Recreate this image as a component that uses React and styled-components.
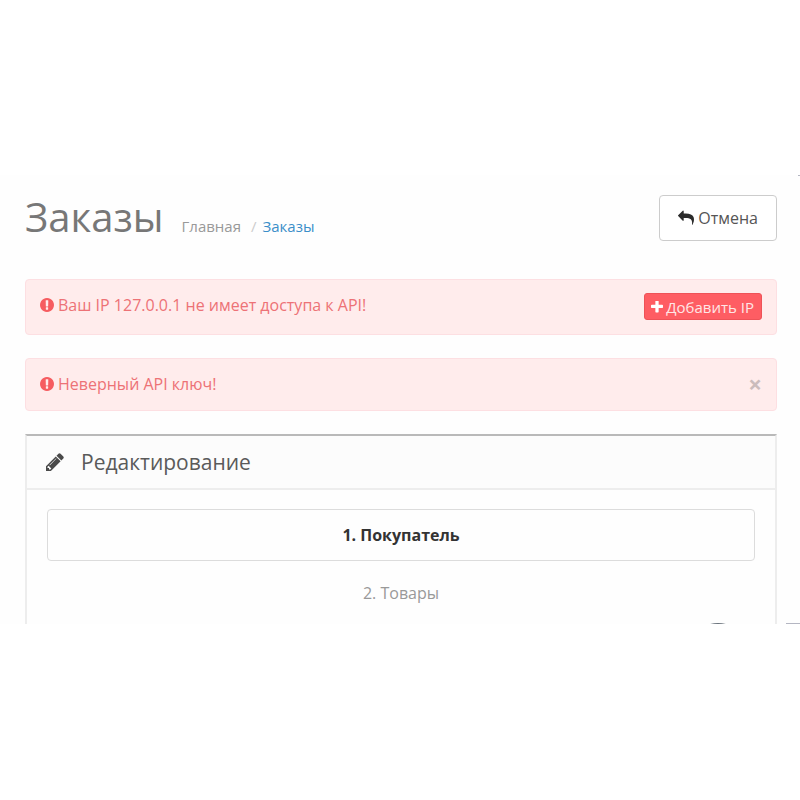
import React from 'react'
import styled, { createGlobalStyle } from 'styled-components'

const GlobalStyle = createGlobalStyle`
    * {
        box-sizing: border-box;
    }
    body {
        margin: 0;
        background: #fff;
        color: #444;
        font-family: "Open Sans", "Noto Sans", sans-serif;
        font-size: 16px;
        line-height: 24px;
    }
`;

const Screen = styled.div`
    position: relative;
    margin-top: 175px;
    padding: 20px 23px 0 25px;
    background: #fefefe;
    overflow: hidden;
`;

const PageHeader = styled.header`
    display: flex;
    justify-content: space-between;
    align-items: flex-start;
    margin-bottom: 38px;
`;

const Heading = styled.div`
    display: flex;
    align-items: baseline;
    gap: 18px;
    h1 {
        margin: 0;
        color: #777;
        font-size: 40px;
        font-weight: 400;
        line-height: 44px;
    }
`;

const Breadcrumb = styled.nav`
    display: flex;
    gap: 6px;
    font-size: 15px;
    color: #ccc;
    span {
        margin-left: 4px;
    }
`;

const Crumb = styled.a`
    color: ${({ $active }) => ($active ? '#3b8fc9' : '#999')};
    text-decoration: none;
`;

const Button = styled.button`
    display: flex;
    justify-content: center;
    align-items: center;
    gap: 4px;
    height: 46px;
    padding: 0 18px;
    border: 1px solid #ccc;
    border-radius: 4px;
    background: #fff;
    color: #555;
    font: inherit;
    svg {
        color: #2b2b2b;
    }
`;

const DangerButton = styled(Button)`
    height: 27px;
    padding: 0 7px 0 6px;
    border-color: #ee5257;
    border-radius: 3px;
    background: #fe5d63;
    color: #ffe6e6;
    font-size: 15px;
    gap: 3px;
    svg {
        color: #fff;
    }
`;

const Alert = styled.div`
    display: flex;
    justify-content: space-between;
    align-items: flex-start;
    margin-bottom: 23px;
    padding: 13px 14px 14px;
    border: 1px solid #fddfe2;
    border-radius: 4px;
    background: #ffecec;
    color: #ed7276;
`;

const Message = styled.div`
    display: flex;
    align-items: center;
    gap: 4px;
    svg {
        color: #f65c60;
    }
`;

const CloseButton = styled.button`
    padding: 0;
    border: none;
    background: transparent;
    color: #cbbcbc;
    font: inherit;
    font-size: 24px;
    font-weight: 700;
    line-height: 24px;
`;

const Panel = styled.section`
    border: 2px solid #ededed;
    border-top-color: #b9b9b9;
    border-bottom: none;
`;

const PanelHeading = styled.div`
    display: flex;
    align-items: center;
    gap: 17px;
    padding: 11px 19px;
    border-bottom: 2px solid #ededed;
    background: #fcfcfc;
    h2 {
        margin: 0;
        color: #5a5a5a;
        font-size: 21px;
        font-weight: 400;
        line-height: 30px;
    }
    svg {
        color: #4a4a4a;
    }
`;

const Steps = styled.div`
    display: flex;
    flex-direction: column;
    gap: 6px;
    padding: 19px 20px 5px;
`;

const Step = styled.button`
    height: 52px;
    border: 1px solid ${({ $active }) => ($active ? '#dcdcdc' : 'transparent')};
    border-radius: 4px;
    background: transparent;
    color: ${({ $active }) => ($active ? '#333' : '#999')};
    font: inherit;
    font-weight: ${({ $active }) => ($active ? 700 : 400)};
`;

const ChatBubble = styled.div`
    position: absolute;
    right: 51px;
    bottom: -61px;
    width: 62px;
    height: 62px;
    border-radius: 50%;
    background: #68717a;
`;

const Edge = styled.div`
    position: absolute;
    right: 0;
    width: ${({ $width }) => $width}px;
    height: 1px;
    background: #b4b6c2;
    ${({ $side }) => $side}: 0;
`;

const paths = {
    reply: 'M1792 1120q0 166-127 451-3 7-10.5 24t-13.5 30-13 22q-12 17-28 17-15 0-23.5-10t-8.5-25q0-9 2.5-26.5t2.5-23.5q5-68 5-123 0-101-17.5-181t-48.5-138.5-80-101-105.5-69.5-133-42.5-154-21.5-175.5-6h-224v256q0 26-19 45t-45 19-45-19l-512-512q-19-19-19-45t19-45l512-512q19-19 45-19t45 19 19 45v256h224q713 0 875 403 53 134 53 333z',
    alert: 'M896 128q209 0 385.5 103t279.5 279.5 103 385.5-103 385.5-279.5 279.5-385.5 103-385.5-103-279.5-279.5-103-385.5 103-385.5 279.5-279.5 385.5-103zm128 1247v-190q0-14-9-23.5t-22-9.5h-192q-13 0-23 10t-10 23v190q0 13 10 23t23 10h192q13 0 22-9.5t9-23.5zm-2-344l18-621q0-12-10-18-10-8-24-8h-220q-14 0-24 8-10 6-10 18l17 621q0 10 10 17.5t24 7.5h185q14 0 23.5-7.5t10.5-17.5z',
    plus: 'M1600 736v192q0 40-28 68t-68 28h-416v416q0 40-28 68t-68 28h-192q-40 0-68-28t-28-68v-416h-416q-40 0-68-28t-28-68v-192q0-40 28-68t68-28h416v-416q0-40 28-68t68-28h192q40 0 68 28t28 68v416h416q40 0 68 28t28 68z',
    pencil: 'M491 1536l91-91-235-235-91 91v107h128v128h107zm523-928q0-22-22-22-10 0-17 7l-542 542q-7 7-7 17 0 22 22 22 10 0 17-7l542-542q7-7 7-17zm-54-192l416 416-832 832h-416v-416zm683 96q0 53-37 90l-166 166-416-416 166-165q36-38 90-38 53 0 91 38l235 234q37 39 37 91z',
}

const Icon = ({ name, size, box = '0 0 1792 1792' }) => (
    <svg width={size} height={size} viewBox={box} fill="currentColor" aria-hidden="true">
        <path d={paths[name]} />
    </svg>
)

const App = () => {
  return (
    <>
        <GlobalStyle />
        <Screen>
            <PageHeader>
                <Heading>
                    <h1>Заказы</h1>
                    <Breadcrumb>
                        <Crumb href="#home">Главная</Crumb>
                        <span>/</span>
                        <Crumb href="#orders" $active>Заказы</Crumb>
                    </Breadcrumb>
                </Heading>
                <Button><Icon name="reply" size={16} />Отмена</Button>
            </PageHeader>
            <Alert>
                <Message>
                    <Icon name="alert" size={14} box="128 128 1536 1536" />
                    Ваш IP 127.0.0.1 не имеет доступа к API!
                </Message>
                <DangerButton>
                    <Icon name="plus" size={12} box="192 192 1408 1408" />
                    Добавить IP
                </DangerButton>
            </Alert>
            <Alert>
                <Message>
                    <Icon name="alert" size={14} box="128 128 1536 1536" />
                    Неверный API ключ!
                </Message>
                <CloseButton aria-label="Закрыть">×</CloseButton>
            </Alert>
            <Panel>
                <PanelHeading>
                    <Icon name="pencil" size={18} box="128 128 1536 1536" />
                    <h2>Редактирование</h2>
                </PanelHeading>
                <Steps>
                    <Step $active>1. Покупатель</Step>
                    <Step>2. Товары</Step>
                </Steps>
            </Panel>
            <ChatBubble />
            <Edge $side="top" $width={2} />
            <Edge $side="bottom" $width={14} />
        </Screen>
    </>
  )
}

export default App;
